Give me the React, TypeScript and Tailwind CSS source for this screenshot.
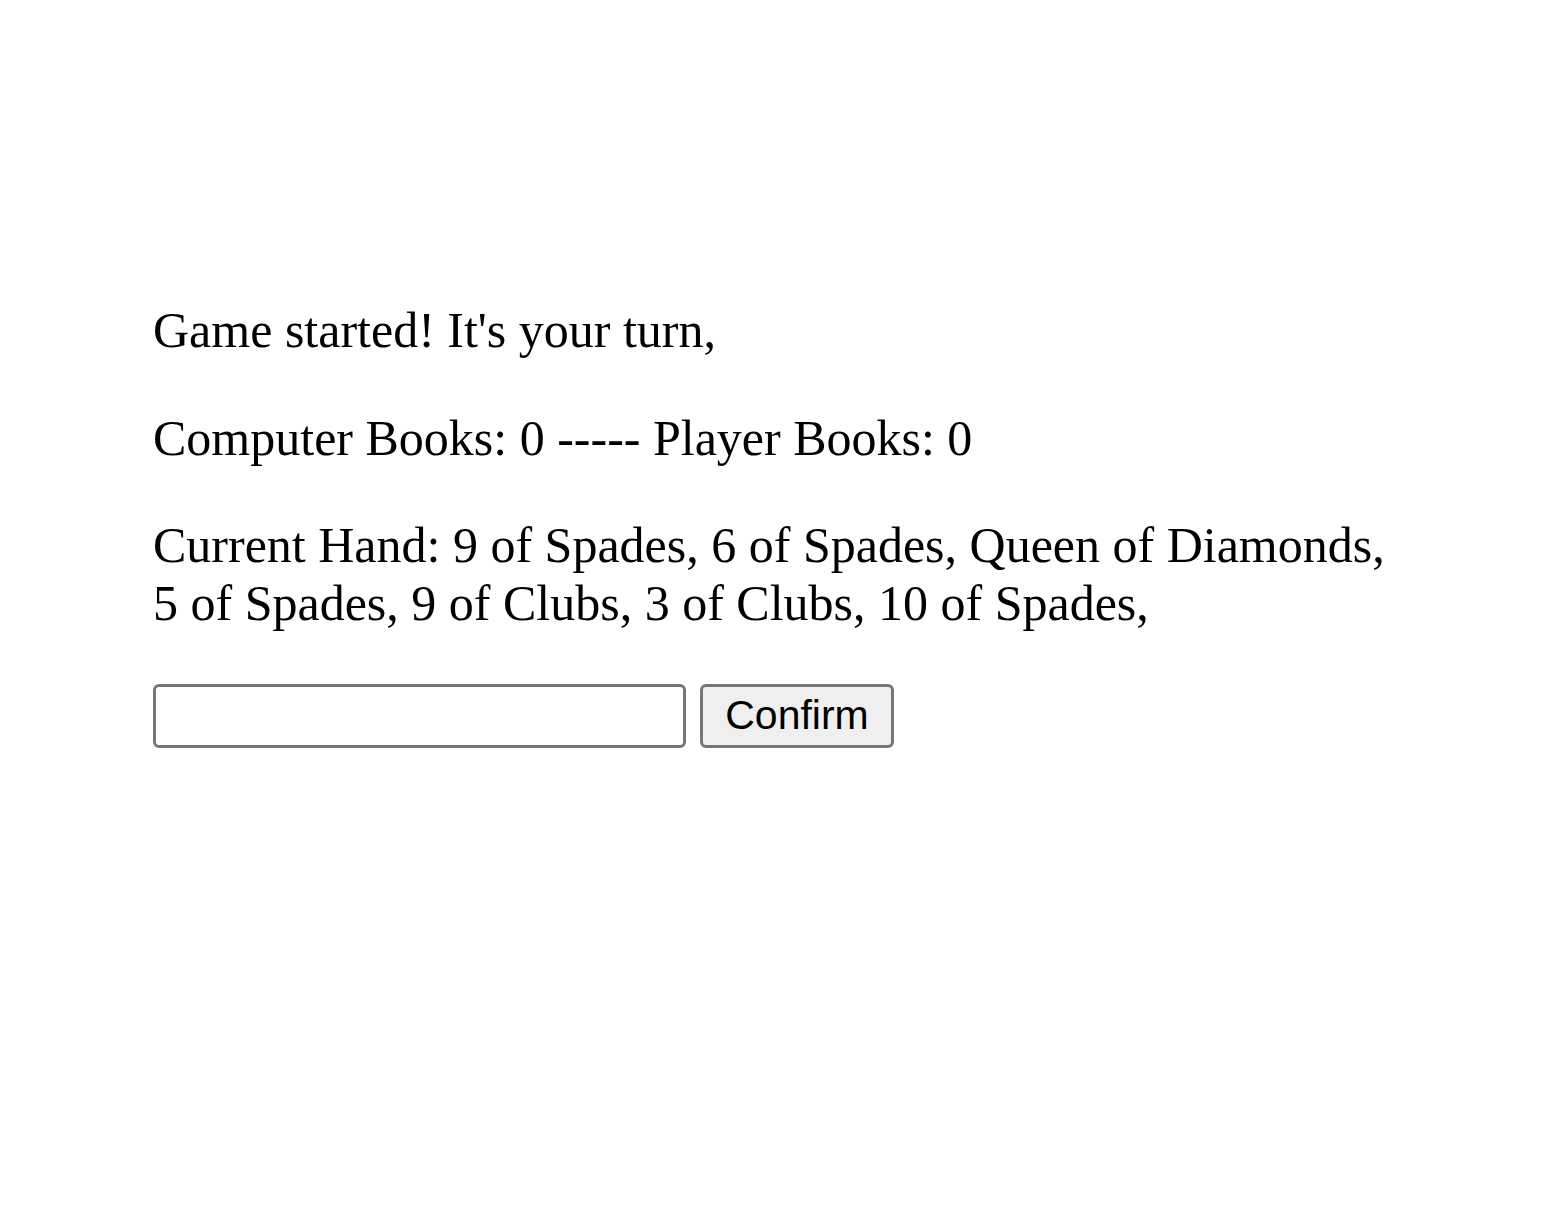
export default function App() {
  return (
    <div className="min-h-screen bg-white pt-[302px] pl-[153px] pr-[153px] text-black">
      <div className="font-['Liberation_Serif',serif] text-[50px] leading-[57.5px]">
        <p className="m-0 mb-[50px]">Game started! It's your turn,</p>
        <p className="m-0 mb-[50px]">Computer Books: 0 ----- Player Books: 0</p>
        <p className="m-0 mb-[52px]">
          Current Hand: 9 of Spades, 6 of Spades, Queen of Diamonds, 5 of Spades, 9 of Clubs, 3 of Clubs, 10 of Spades,
        </p>
      </div>
      <div className="flex items-start gap-[14px]">
        <input
          type="text"
          className="w-[533px] h-[64px] border-[3px] border-[#767676] rounded-[6px] bg-white px-[5px] font-['Liberation_Sans',sans-serif] text-[33px] outline-none"
        />
        <button className="w-[194px] h-[64px] border-[3px] border-[#767676] rounded-[6px] bg-[#efefef] font-['Liberation_Sans',Arial,sans-serif] text-[41px] text-black leading-none pb-[1px]">
          Confirm
        </button>
      </div>
    </div>
  );
}
